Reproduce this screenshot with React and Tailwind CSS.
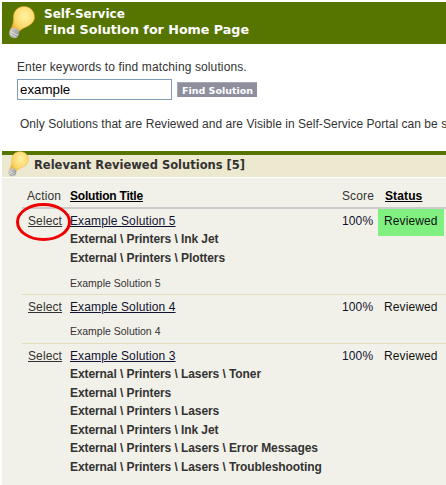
import React from "react";

function Bulb({ w, h }) {
  return (
    <svg width={w} height={h} viewBox="0 0 26 33" className="block">
      <defs>
        <radialGradient id="bulbG" cx="0.6" cy="0.35" r="0.7">
          <stop offset="0" stopColor="#fff3a6" />
          <stop offset="0.6" stopColor="#fcd868" />
          <stop offset="1" stopColor="#eaa62c" />
        </radialGradient>
        <linearGradient id="bulbB" x1="0" y1="0" x2="1" y2="1">
          <stop offset="0" stopColor="#d8d8d8" />
          <stop offset="1" stopColor="#8a8a8a" />
        </linearGradient>
      </defs>
      <path d="M15 0.5C9 0.5 4.500 5 4.500 11C4.500 16 4 19 1.500 23.500L9 28C10 24 14 22.500 19 20C23 18 25.500 15 25.500 11C25.500 5 21 0.500 15 0.500Z" fill="url(#bulbG)" stroke="#e2aa3a" strokeWidth="0.5" />
      <ellipse cx="5.200" cy="27" rx="5" ry="5.200" fill="url(#bulbB)" />
      <path d="M1.500 25.500L9 29.500M1 28L7.500 31.500" stroke="#efefef" strokeWidth="0.8" />
    </svg>
  );
}

const reg = "text-[12px] leading-[14px] tracking-[0.12px]";

function Row({ title, paths, desc, descClass, reviewed, border, rowClass }) {
  return (
    <div className={`flex items-stretch ml-[20px] ${border ? "border-t border-[#e3deb8]" : ""} ${rowClass}`}>
      <div className={`w-[48px] pt-[5px] pl-[6px] ${reg} text-[#333] underline`}>Select</div>
      <div className="w-[272px] pt-[5px]">
        <div className={`${reg} text-[#111133] underline`}>{title}</div>
        <div className="mt-[2px]">
          {paths.map((p) => (
            <div key={p} className="text-[12px] leading-[18.600px] font-bold tracking-[-0.08px] text-[#333]">{p}</div>
          ))}
        </div>
        {desc && <div className={`text-[10.500px] leading-[13px] text-[#333] ${descClass}`}>{desc}</div>}
      </div>
      <div className={`w-[36px] pt-[5px] ${reg} text-[#111133]`}>100%</div>
      <div className={`w-[66px] h-[27px] pl-[6px] pt-[5px] ${reg} text-[#111] ${reviewed ? "bg-[#80f080]" : ""}`}>Reviewed</div>
    </div>
  );
}

export default function App() {
  return (
    <div className="relative w-[446px] h-[485px] bg-white pt-[2px] pl-[2px] overflow-hidden font-['Liberation_Sans',Arial,sans-serif]">
      <div className="h-[42px] bg-[#567400] flex items-center">
        <div className="w-[42px] pl-[7px] shrink-0 -mt-[2px]"><Bulb w={26} h={33} /></div>
        <div className="text-white font-bold font-['DejaVu_Sans',Verdana,sans-serif] -mt-[2px]">
          <div className="text-[12px] leading-[15px]">Self-Service</div>
          <div className="text-[12.700px] leading-[15px]">Find Solution for Home Page</div>
        </div>
      </div>

      <div className="pl-[15px] pt-[16px] h-[107px] whitespace-nowrap">
        <div className={`${reg} text-[#333]`}>Enter keywords to find matching solutions.</div>
        <div className="flex items-center mt-[5px]">
          <div className="w-[155px] h-[21px] border border-[#7f9db9] pl-[2px] text-[13.300px] leading-[19px] text-black bg-white">example</div>
          <div className="ml-[5px] w-[80px] h-[15px] bg-[#8e8e9e] text-white font-bold font-['DejaVu_Sans',Verdana,sans-serif] text-[9.500px] leading-[15px] text-center border-t border-l border-[#a8a8b4]">Find Solution</div>
        </div>
        <div className="mt-[17px] ml-[3px] text-[12px] leading-[14px] tracking-[0.04px] text-[#333]">Only Solutions that are Reviewed and are Visible in Self-Service Portal can be selected</div>
      </div>

      <div className="h-[4px] bg-[#567400]" />
      <div className="h-[23px] bg-[#ede9d0] flex items-center pl-[32px] text-[11.500px] font-bold text-[#333] font-['DejaVu_Sans',Verdana,sans-serif] border-b border-white">
        Relevant Reviewed Solutions [5]
      </div>
      <div className="absolute left-[8px] top-[151px]"><Bulb w={21} h={26} /></div>

      <div className="bg-[#f2f1e9] h-[307px] pt-[1px]">
        <div className={`flex ml-[20px] h-[30px] pt-[10px] border-b-2 border-[#cccccc] ${reg} text-[#333]`}>
          <div className="w-[48px] pl-[5px]">Action</div>
          <div className="w-[272px] font-bold underline text-black tracking-[-0.2px]">Solution Title</div>
          <div className="w-[36px]">Score</div>
          <div className="pl-[7px] font-bold underline text-black">Status</div>
        </div>
        <Row title="Example Solution 5" paths={["External \\ Printers \\ Ink Jet", "External \\ Printers \\ Plotters"]} desc="Example Solution 5" descClass="mt-[9.500px]" reviewed rowClass="h-[85px]" />
        <Row title="Example Solution 4" paths={[]} desc="Example Solution 4" descClass="mt-[11px]" border rowClass="h-[49px]" />
        <Row title="Example Solution 3" border rowClass="h-[130px]" paths={[
          "External \\ Printers \\ Lasers \\ Toner",
          "External \\ Printers",
          "External \\ Printers \\ Lasers",
          "External \\ Printers \\ Ink Jet",
          "External \\ Printers \\ Lasers \\ Error Messages",
          "External \\ Printers \\ Lasers \\ Troubleshooting",
        ]} />
      </div>

      <svg className="absolute left-[15px] top-[202px]" width="58" height="40" viewBox="0 0 58 40">
        <ellipse cx="28.500" cy="20" rx="26" ry="17.500" fill="none" stroke="#ee0000" strokeWidth="3" />
      </svg>
    </div>
  );
}
